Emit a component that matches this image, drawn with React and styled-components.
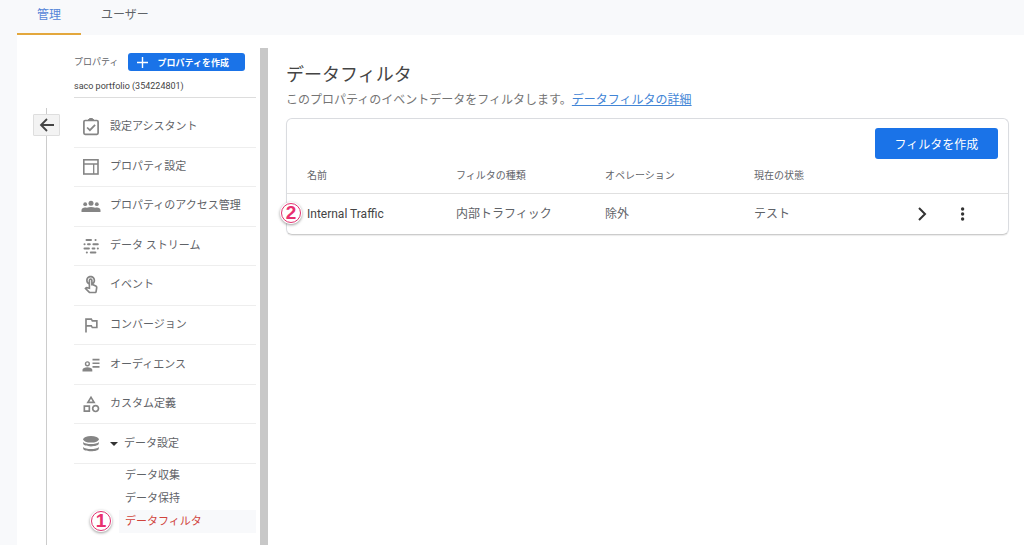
import React, { useState } from 'react';
import styled, { createGlobalStyle } from 'styled-components';
import { MdOutlineTouchApp, MdOutlinedFlag, MdOutlineCategory } from 'react-icons/md';

const GlobalStyle = createGlobalStyle`
	* {
		box-sizing: border-box;
	}
	body {
		margin: 0;
		background: #fff;
		color: #5f6368;
		font-family: Roboto, 'Noto Sans CJK JP', sans-serif;
		font-size: 12px;
		line-height: 16px;
	}
	button {
		font-family: inherit;
		cursor: pointer;
	}
`;
const Page = styled.div`
	display: flex;
	flex-direction: column;
	height: 100vh;
	overflow: hidden;
`;
const TabBar = styled.nav`
	display: flex;
	flex: none;
	height: 35px;
	padding-left: 17px;
	background: #f8f9fb;
`;
const Tab = styled.a`
	display: flex;
	justify-content: center;
	padding: 7px 20px 0;
	border-bottom: 2px solid ${(props) => (props.$active ? '#e3a73c' : 'transparent')};
	color: ${(props) => (props.$active ? '#5484d8' : '#5f6368')};
	text-decoration: none;
`;
const Body = styled.div`
	display: flex;
	flex: 1;
	min-height: 0;
	border-left: 17px solid #f8f9fb;
`;
const Rail = styled.div`
	display: flex;
	flex-direction: column;
	align-items: center;
	flex: none;
	width: 57px;
	padding: 73px 0 0 2px;
`;
const RailLine = styled.div`
	flex: ${(props) => (props.$short ? 'none' : '1')};
	width: 1px;
	height: 6px;
	background: #ccc;
`;
const BackButton = styled.button`
	display: flex;
	align-items: center;
	justify-content: center;
	width: 27px;
	height: 22px;
	padding: 0;
	border: 1px solid #dedede;
	border-radius: 1px;
	background: #f3f3f3;
	color: #444;
`;
const Sidebar = styled.aside`
	display: flex;
	flex-direction: column;
	flex: none;
	width: 182px;
	padding-top: 17px;
`;
const PropertyHeader = styled.div`
	display: flex;
	align-items: center;
	gap: 10px;
	height: 20px;
	font-size: 9px;
`;
const CreateProperty = styled.button`
	display: flex;
	align-items: center;
	gap: 9px;
	width: 117px;
	height: 18px;
	padding: 0 9px;
	border: 0;
	border-radius: 3px;
	background: #1a73e8;
	color: #fff;
	font-size: 9px;
	font-weight: 700;
`;
const PropertyName = styled.div`
	height: 26px;
	padding-top: 6px;
	border-bottom: 1px solid #ddd;
	color: #444;
	font-size: 9px;
`;
const Menu = styled.ul`
	display: grid;
	grid-auto-rows: 1fr;
	min-height: 356px;
	margin: 10px 0 0;
	padding: 0;
	list-style: none;
`;
const MenuItem = styled.li`
	display: flex;
	border-bottom: 1px solid #eee;
`;
const MenuLink = styled.a`
	display: flex;
	flex: 1;
	align-items: center;
	gap: 9px;
	padding-left: 7px;
	color: #5f6368;
	font-size: 11px;
	text-decoration: none;
	white-space: nowrap;
	svg {
		flex: none;
		color: #858585;
	}
`;
const Caret = styled.span`
	width: 0;
	margin-right: -3px;
	border: 4px solid transparent;
	border-top-color: #333;
	border-bottom: 0;
`;
const SubMenu = styled.ul`
	margin: 0;
	padding: 0 0 0 45px;
	list-style: none;
`;
const SubLink = styled.a`
	display: flex;
	align-items: center;
	position: relative;
	height: 23px;
	padding-left: 6px;
	background: ${(props) => (props.$active ? '#f8f9fb' : 'none')};
	color: ${(props) => (props.$active ? '#d0433b' : '#5f6368')};
	font-size: 11px;
	text-decoration: none;
`;
const Badge = styled.span`
	position: absolute;
	top: 50%;
	left: ${(props) => props.$left}px;
	display: flex;
	align-items: center;
	justify-content: center;
	width: 20px;
	height: 20px;
	margin-top: -11px;
	border: 1px solid #e0316f;
	border-radius: 50%;
	background: #fff;
	box-shadow: 0 0 0 1px #fff, 0 1px 3px 1px rgba(0, 0, 0, 0.4);
	color: #e8306f;
	font-family: 'Liberation Sans', sans-serif;
	font-size: 19px;
	font-weight: 700;
	line-height: 18px;
`;
const ScrollTrack = styled.div`
	flex: none;
	width: 8px;
	margin: 13px 18px 0 4px;
	background: #c8c8c8;
`;
const Main = styled.main`
	flex: 1;
	min-width: 0;
	padding: 27px 15px 0 0;
`;
const Title = styled.h1`
	margin: 0;
	color: #444;
	font-size: 18px;
	font-weight: 400;
	line-height: 26px;
`;
const Description = styled.p`
	margin: 4px 0 10px;
	color: #757575;
	a {
		color: #4285d6;
	}
`;
const Card = styled.section`
	border: 1px solid #dadce0;
	border-bottom-color: #ccc;
	border-radius: 6px;
	box-shadow: 0 1px 1px rgba(0, 0, 0, 0.08);
`;
const CardActions = styled.div`
	display: flex;
	justify-content: flex-end;
	padding: 9px 10px 0;
`;
const CreateFilter = styled.button`
	width: 123px;
	height: 31px;
	padding: 0;
	border: 0;
	border-radius: 3px;
	background: #1a73e8;
	color: #fff;
	font-size: 12px;
`;
const FilterTable = styled.table`
	width: 100%;
	border-collapse: collapse;
	table-layout: fixed;
	text-align: left;
	th {
		width: 149px;
		height: 34px;
		padding: 0;
		border-bottom: 1px solid #e0e0e0;
		font-size: 10px;
		font-weight: 400;
	}
	th:first-child {
		width: 169px;
	}
	th:last-child {
		width: auto;
	}
	td {
		position: relative;
		height: 41px;
		padding: 0;
	}
	th:first-child,
	td:first-child {
		padding-left: 20px;
	}
	td:first-child {
		color: #444;
	}
`;
const RowActions = styled.div`
	display: flex;
	justify-content: flex-end;
	gap: 20px;
	padding-right: 35px;
`;
const IconButton = styled.button`
	display: flex;
	align-items: center;
	justify-content: center;
	width: 20px;
	height: 20px;
	padding: 0;
	border: 0;
	background: none;
	color: #333;
`;

const ClipboardIcon = () => (
	<svg width='20' height='20' viewBox='0 0 20 20' fill='none' stroke='currentColor' strokeWidth='1.7'>
		<rect x='2.9' y='3.5' width='14.2' height='13.8' rx='1.2' />
		<path d='M7 3.2 8.6 1.5h2.8L13 3.2z' fill='currentColor' strokeWidth='1' />
		<path d='m6.1 10.5 2.8 2.7 5.2-5.4' />
	</svg>
);
const LayoutIcon = () => (
	<svg width='20' height='20' viewBox='0 0 20 20' fill='none' stroke='currentColor' strokeWidth='1.6'>
		<rect x='2.8' y='2.8' width='14.2' height='14.2' />
		<path d='M3 7h14M12.7 7v10' strokeWidth='1.3' />
	</svg>
);
const PeopleIcon = () => (
	<svg width='20' height='20' viewBox='0 0 20 20' fill='currentColor'>
		<circle cx='4.2' cy='8.2' r='1.9' />
		<circle cx='10' cy='7.2' r='2.5' />
		<circle cx='15.8' cy='8.2' r='1.9' />
		<path d='M.5 16v-1.8c0-2.6 3.2-3.2 5.4-2.4 2.4-1.2 5.8-1.2 8.2 0 2.2-.8 5.4-.2 5.4 2.4V16z' />
	</svg>
);
const StreamIcon = () => (
	<svg width='20' height='20' viewBox='0 0 20 20' fill='none' stroke='currentColor' strokeWidth='2' strokeLinecap='round'>
		<path d='M5.5 4h4.5M14.5 4h.1M3.5 8.2h.1M7 8.2h1.8M12.4 8.2h4.4M3.5 12.4h4.4M11.6 12.4h1.8M16.8 12.4h.1M5.8 16.6h.1M9.8 16.6h4.6' />
	</svg>
);
const AudienceIcon = () => (
	<svg width='20' height='20' viewBox='0 0 20 20' fill='currentColor'>
		<circle cx='6.4' cy='8.8' r='1.9' fill='none' stroke='currentColor' strokeWidth='1.4' />
		<path d='M1.5 16.4v-1.6c0-3.4 9.8-3.4 9.8 0v1.6z' />
		<path d='M11.5 3.8h7v1.7h-7zM11.5 7.4h7v1.7h-7zM11.5 11h7v1.7h-7z' />
	</svg>
);
const DatabaseIcon = () => (
	<svg width='20' height='20' viewBox='0 0 20 20' fill='currentColor'>
		<ellipse cx='10' cy='5.3' rx='7.8' ry='3.3' />
		<path d='M2.2 8c2.2 2.8 13.4 2.8 15.6 0v1.6c0 3.7-15.6 3.7-15.6 0zM2.2 12.9c2.2 2.8 13.4 2.8 15.6 0v1.6c0 3.7-15.6 3.7-15.6 0z' />
	</svg>
);
const FlagIcon = () => <MdOutlinedFlag size={20} />;
const TouchIcon = () => <MdOutlineTouchApp size={20} />;
const CategoryIcon = () => <MdOutlineCategory size={20} />;

const menuItems = [
	{ label: '設定アシスタント', Icon: ClipboardIcon },
	{ label: 'プロパティ設定', Icon: LayoutIcon },
	{ label: 'プロパティのアクセス管理', Icon: PeopleIcon },
	{ label: 'データ ストリーム', Icon: StreamIcon },
	{ label: 'イベント', Icon: TouchIcon },
	{ label: 'コンバージョン', Icon: FlagIcon },
	{ label: 'オーディエンス', Icon: AudienceIcon },
	{ label: 'カスタム定義', Icon: CategoryIcon },
	{ label: 'データ設定', Icon: DatabaseIcon, expandable: true },
];
const subItems = ['データ収集', 'データ保持', 'データフィルタ'];

function App() {
	const [tab, setTab] = useState('管理');
	const [open, setOpen] = useState(true);

	return (
		<Page>
			<GlobalStyle />
			<TabBar>
				{['管理', 'ユーザー'].map((name) => (
					<Tab key={name} href='#' $active={tab === name} onClick={() => setTab(name)}>
						{name}
					</Tab>
				))}
			</TabBar>
			<Body>
				<Rail>
					<RailLine $short />
					<BackButton aria-label='戻る'>
						<svg width='16' height='16' viewBox='0 0 16 16' fill='none' stroke='currentColor' strokeWidth='1.8'>
							<path d='M15 8H2.5M8 2 2 8l6 6' />
						</svg>
					</BackButton>
					<RailLine />
				</Rail>
				<Sidebar>
					<PropertyHeader>
						<span>プロパティ</span>
						<CreateProperty>
							<svg width='11' height='11' viewBox='0 0 11 11' stroke='currentColor' strokeWidth='1.4'>
								<path d='M5.5 0v11M0 5.5h11' />
							</svg>
							プロパティを作成
						</CreateProperty>
					</PropertyHeader>
					<PropertyName>saco portfolio (354224801)</PropertyName>
					<Menu>
						{menuItems.map(({ label, Icon, expandable }) => (
							<MenuItem key={label}>
								<MenuLink href='#' onClick={expandable ? () => setOpen(!open) : undefined}>
									<Icon />
									{expandable ? <Caret /> : null}
									<span>{label}</span>
								</MenuLink>
							</MenuItem>
						))}
					</Menu>
					{open ? (
						<SubMenu>
							{subItems.map((label) => {
								const active = label === 'データフィルタ';
								return (
									<li key={label}>
										<SubLink href='#' $active={active}>
											{active ? <Badge $left={-28}>1</Badge> : null}
											{label}
										</SubLink>
									</li>
								);
							})}
						</SubMenu>
					) : null}
				</Sidebar>
				<ScrollTrack />
				<Main>
					<Title>データフィルタ</Title>
					<Description>
						このプロパティのイベントデータをフィルタします。
						<a href='#'>データフィルタの詳細</a>
					</Description>
					<Card>
						<CardActions>
							<CreateFilter>フィルタを作成</CreateFilter>
						</CardActions>
						<FilterTable>
							<thead>
								<tr>
									<th>名前</th>
									<th>フィルタの種類</th>
									<th>オペレーション</th>
									<th>現在の状態</th>
									<th aria-label='操作' />
								</tr>
							</thead>
							<tbody>
								<tr>
									<td>
										<Badge $left={-6}>2</Badge>
										Internal Traffic
									</td>
									<td>内部トラフィック</td>
									<td>除外</td>
									<td>テスト</td>
									<td>
										<RowActions>
											<IconButton aria-label='開く'>
												<svg width='20' height='20' viewBox='0 0 20 20' fill='none' stroke='currentColor' strokeWidth='2'>
													<path d='m6 4 6 6-6 6' />
												</svg>
											</IconButton>
											<IconButton aria-label='その他'>
												<svg width='20' height='20' viewBox='0 0 20 20' fill='currentColor'>
													<circle cx='9.6' cy='5' r='1.7' />
													<circle cx='9.6' cy='10' r='1.7' />
													<circle cx='9.6' cy='15' r='1.7' />
												</svg>
											</IconButton>
										</RowActions>
									</td>
								</tr>
							</tbody>
						</FilterTable>
					</Card>
				</Main>
			</Body>
		</Page>
	);
}

export default App;
